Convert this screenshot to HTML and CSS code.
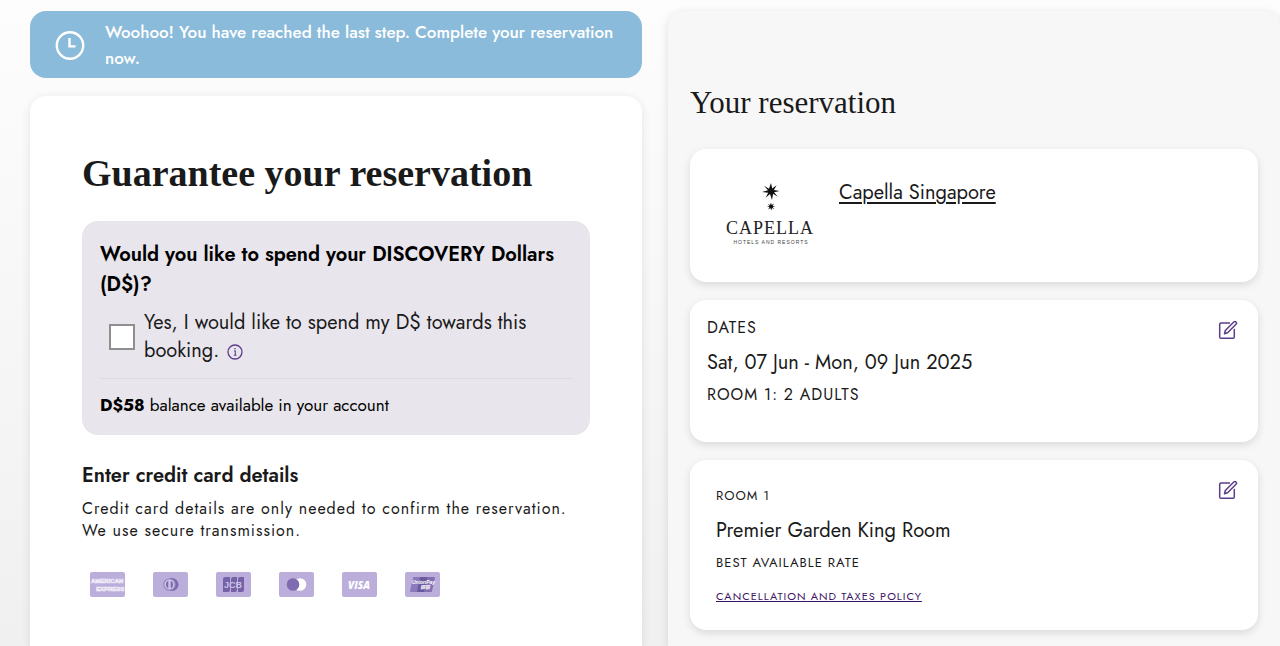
FILE: index.html
```html
<!DOCTYPE html>
<html lang="en">
<head>
    <meta charset="UTF-8">
    <meta name="viewport" content="width=device-width, initial-scale=1.0">
    <title>Guarantee your reservation</title>
    <link rel="stylesheet" href="styles.css">
</head>
<body>

    <main class="booking">
        <div class="payment-column">
            <div class="notice">
                <svg class="notice-icon" viewBox="0 0 30 30" fill="none" stroke="#fff" stroke-width="2.4">
                    <circle cx="15" cy="15.5" r="13.2"/>
                    <path d="M14.5 8v8.400h6"/>
                </svg>
                <p>Woohoo! You have reached the last step. Complete your reservation now.</p>
            </div>

            <section class="payment-card">
                <h1>Guarantee your reservation</h1>

                <!-- DISCOVERY Dollars -->
                <div class="dollars">
                    <h2>Would you like to spend your DISCOVERY Dollars (D$)?</h2>
                    <div class="spend">
                        <input type="checkbox" id="spend-dollars" name="spend-dollars">
                        <label for="spend-dollars">Yes, I would like to spend my D$ towards this booking.
                            <svg class="info-icon" viewBox="0 0 16 16" fill="none" stroke="#5c3d8c" stroke-width="1.3">
                                <circle cx="8" cy="8" r="7"/>
                                <path d="M7 7h1.300v4.200M6.800 11.300h2.600" stroke-width="1.100"/>
                                <circle cx="8" cy="4.800" r=".4" fill="#5c3d8c" stroke-width=".8"/>
                            </svg>
                        </label>
                    </div>
                    <p class="balance"><strong>D$58</strong> balance available in your account</p>
                </div>

                <h2>Enter credit card details</h2>
                <p class="card-note">Credit card details are only needed to confirm the reservation. We use secure transmission.</p>

                <ul class="card-types">
                    <li>
                        <svg viewBox="0 0 35 25" role="img" aria-label="American Express">
                            <rect width="35" height="25" rx="2" fill="#bbaedb"/>
                            <g fill="#bbaedb" stroke="#efebf7" stroke-width=".7" font-family="Liberation Sans, sans-serif" font-weight="bold" font-size="6">
                                <text x="1" y="11">AMERICAN</text>
                                <text x="6" y="18.500">EXPRESS</text>
                            </g>
                        </svg>
                    </li>
                    <li>
                        <svg viewBox="0 0 35 25" role="img" aria-label="Diners Club">
                            <rect width="35" height="25" rx="2" fill="#bbaedb"/>
                            <path d="M17 6h2a6.500 6.500 0 0 1 0 13h-2z" fill="#7d69ad"/>
                            <circle cx="16.500" cy="12.500" r="6.300" fill="#9a88c5"/>
                            <circle cx="16.500" cy="12.500" r="5" fill="#cfc6e6"/>
                            <path d="M15.300 8.800a4 4 0 0 0 0 7.400zM17.700 8.800a4 4 0 0 1 0 7.400z" fill="#7d69ad"/>
                        </svg>
                    </li>
                    <li>
                        <svg viewBox="0 0 35 25" role="img" aria-label="JCB">
                            <rect width="35" height="25" rx="2" fill="#bbaedb"/>
                            <path d="M9 5h5v13q0 2-2 2H7V7q0-2 2-2zM17 5h4v13q0 2-2 2h-4V7q0-2 2-2zM24 5h4v13q0 2-2 2h-4V7q0-2 2-2z" fill="#7461a6"/>
                            <text x="8" y="16" fill="#cdc2e6" font-family="Liberation Sans, sans-serif" font-weight="bold" font-size="9">JCB</text>
                        </svg>
                    </li>
                    <li>
                        <svg viewBox="0 0 35 25" role="img" aria-label="Mastercard">
                            <rect width="35" height="25" rx="2" fill="#bbaedb"/>
                            <circle cx="21" cy="12.500" r="6.300" fill="#fff"/>
                            <circle cx="14" cy="12.500" r="6.300" fill="#7f6bb1"/>
                        </svg>
                    </li>
                    <li>
                        <svg viewBox="0 0 35 25" role="img" aria-label="Visa">
                            <rect width="35" height="25" rx="2" fill="#bbaedb"/>
                            <text x="6" y="16.500" fill="#fff" font-family="Open Sans, sans-serif" font-weight="800" font-style="italic" font-size="10">VISA</text>
                        </svg>
                    </li>
                    <li>
                        <svg viewBox="0 0 35 25" role="img" aria-label="UnionPay">
                            <rect width="35" height="25" rx="2" fill="#bbaedb"/>
                            <path d="M9 5h7l-3 15H6q-1 0-1-1L8 6q0-1 1-1z" fill="#8c79bb"/>
                            <path d="M15 5h8l-3 15h-8z" fill="#6c589f"/>
                            <path d="M22 5h7q1 0 1 1l-3 13q0 1-1 1h-7z" fill="#8270b3"/>
                            <g fill="#fff" font-family="Liberation Sans, Noto Sans CJK SC, sans-serif" font-weight="bold" font-style="italic">
                                <text x="7" y="12" font-size="5">UnionPay</text>
                                <text x="15" y="17" font-size="5">银联</text>
                            </g>
                        </svg>
                    </li>
                </ul>
            </section>
        </div>

        <aside class="summary">
            <h2 class="summary-title">Your reservation</h2>

            <div class="summary-card hotel">
                <svg class="hotel-logo" viewBox="0 0 90 66" role="img" aria-label="Capella Hotels and Resorts">
                    <path d="M46 0l1.200 5.600 4.400-3.400-2.700 4.900 5.600.9-5.400 1.200 3.600 4.600-4.600-3-1.100 6.200-2-6-4.400 3.800 2.600-5-6.200-.8 6-1.800-4-4.400 5 3z" fill="#111"/>
                    <path d="M46 19.500l.7 2.500 2.200-1.400-1.200 2.300 2.600.5-2.600.7 1.600 2.200-2.200-1.300-.9 2.600-.8-2.600-2.200 1.400 1.300-2.300-2.700-.4 2.700-.8-1.700-2 2.300 1.200z" fill="#111"/>
                    <text x="45" y="51" text-anchor="middle" font-family="Liberation Serif, serif" font-size="18" letter-spacing="1" fill="#222">CAPELLA</text>
                    <text x="46" y="61" text-anchor="middle" font-family="Liberation Sans, sans-serif" font-size="5" letter-spacing="1" fill="#444">HOTELS AND RESORTS</text>
                </svg>
                <a class="hotel-name" href="#">Capella Singapore</a>
            </div>

            <div class="summary-card dates">
                <div>
                    <p class="caption">DATES</p>
                    <p class="value">Sat, 07 Jun - Mon, 09 Jun 2025</p>
                    <p class="caption">ROOM 1: 2 ADULTS</p>
                </div>
                <button class="edit" type="button" aria-label="Edit dates">
                    <svg viewBox="0 0 20 20" fill="none" stroke="#5c3d8c" stroke-width="1.5" stroke-linejoin="round" stroke-linecap="round">
                        <path d="M11.500 3H3Q1.700 3 1.700 4.300V17Q1.700 18.300 3 18.300H15Q16.300 18.300 16.300 17V9.500"/>
                        <path d="M6.500 13.700L7.300 10.500 15.800 2Q17 1 18.200 2.200 19 3.300 18 4.300L9.600 12.700z"/>
                    </svg>
                </button>
            </div>

            <div class="summary-card room">
                <div>
                    <p class="small-caption">ROOM 1</p>
                    <p class="value">Premier Garden King Room</p>
                    <p class="small-caption">BEST AVAILABLE RATE</p>
                    <a class="policy" href="#">CANCELLATION AND TAXES POLICY</a>
                </div>
                <button class="edit" type="button" aria-label="Edit room">
                    <svg viewBox="0 0 20 20" fill="none" stroke="#5c3d8c" stroke-width="1.5" stroke-linejoin="round" stroke-linecap="round">
                        <path d="M11.500 3H3Q1.700 3 1.700 4.300V17Q1.700 18.300 3 18.300H15Q16.300 18.300 16.300 17V9.500"/>
                        <path d="M6.500 13.700L7.300 10.500 15.800 2Q17 1 18.200 2.200 19 3.300 18 4.300L9.600 12.700z"/>
                    </svg>
                </button>
            </div>
        </aside>
    </main>

</body>
</html>
```
FILE: styles.css
```css
* {
    box-sizing: border-box;
}

body {
    font-family: Jost, Lato, sans-serif;
    background: linear-gradient(#fdfdfd, #f0f0f0);
    color: #1a1a1a;
    margin: 0;
    min-height: 100vh;
}

h1, h2, p, ul {
    margin: 0;
}

.booking {
    display: grid;
    grid-template-columns: 1fr 1fr;
    gap: 26px;
    min-height: 100vh;
    padding: 11px 0 0 30px;
}

.payment-column {
    display: flex;
    flex-direction: column;
    gap: 18px;
}

.notice {
    display: flex;
    align-items: center;
    gap: 20px;
    padding: 8px 25px 7px;
    border-radius: 16px;
    background-color: #8bbbda;
    color: white;
    font-size: 17px;
    line-height: 26px;
    font-weight: 500;
}

.notice-icon {
    flex: none;
    width: 30px;
    height: 30px;
}

.payment-card {
    flex: 1;
    padding: 53px 52px 48px;
    border-radius: 16px 16px 0 0;
    background-color: white;
    box-shadow: 0 2px 10px rgba(0, 0, 0, 0.1);
}

h1 {
    font-family: "Liberation Serif", serif;
    font-size: 38px;
    line-height: 48px;
    font-weight: bold;
    margin-bottom: 24px;
}

h2 {
    font-size: 20px;
    line-height: 30px;
    font-weight: 600;
}

.dollars {
    padding: 19px 17px 17px 18px;
    margin-bottom: 26px;
    border-radius: 16px;
    background-color: #e8e5ec;
    color: black;
}

.spend {
    display: flex;
    align-items: center;
    gap: 9px;
    padding: 9px 0 13px 9px;
    border-bottom: 1px solid #dcd9e2;
    font-size: 20px;
    line-height: 28px;
    color: #1a1a1a;
}

.spend input {
    appearance: none;
    flex: none;
    width: 26px;
    height: 26px;
    margin: 0;
    border: 2px solid #8f8f8f;
    background-color: white;
}

.spend input:checked {
    background-color: #5c3d8c;
}

.info-icon {
    width: 16px;
    height: 16px;
    margin-left: 2px;
    vertical-align: -3px;
}

.balance {
    padding-top: 13px;
    font-size: 17px;
    line-height: 26px;
}

.card-note {
    margin-top: 7px;
    font-size: 16px;
    line-height: 22px;
    letter-spacing: 1px;
}

.card-types {
    display: flex;
    gap: 28px;
    padding: 0 8px;
    margin-top: 30px;
    list-style: none;
}

.card-types svg {
    display: block;
    width: 35px;
    height: 25px;
}

.summary {
    display: flex;
    flex-direction: column;
    gap: 18px;
    padding: 72px 22px 16px;
    border-radius: 16px 16px 0 0;
    background-color: #f7f7f7;
    box-shadow: 0 2px 10px rgba(0, 0, 0, 0.12);
}

.summary-title {
    font-family: "Liberation Serif", serif;
    font-size: 31px;
    line-height: 40px;
    font-weight: normal;
    margin-bottom: 8px;
}

.summary-card {
    display: flex;
    justify-content: space-between;
    align-items: flex-start;
    padding: 17px;
    border-radius: 16px;
    background-color: white;
    box-shadow: 0 3px 8px rgba(0, 0, 0, 0.12);
}

.hotel {
    justify-content: flex-start;
    gap: 23px;
    padding: 34px 34px 33px;
}

.hotel-logo {
    width: 92px;
    height: 66px;
}

.hotel-name {
    margin-top: -4px;
    font-size: 20px;
    line-height: 28px;
    color: #1a1a1a;
    text-underline-offset: 3px;
}

.dates {
    padding-bottom: 36px;
}

.room {
    padding-left: 26px;
}

.room > div {
    padding: 9px 0;
}

.caption {
    font-size: 16px;
    line-height: 22px;
    letter-spacing: 1px;
}

.small-caption {
    font-size: 13px;
    line-height: 20px;
    letter-spacing: 1px;
}

.value {
    font-size: 20px;
    line-height: 28px;
    padding: 10px 0 7px;
}

.room .value {
    padding: 11px 0 8px;
}

.policy {
    display: block;
    margin-top: 15px;
    font-size: 11px;
    line-height: 16px;
    letter-spacing: 1px;
    color: #3d1466;
}

.edit {
    width: 26px;
    height: 26px;
    padding: 3px;
    border: none;
    background: none;
    cursor: pointer;
}

.edit svg {
    display: block;
    width: 20px;
    height: 20px;
}
```
